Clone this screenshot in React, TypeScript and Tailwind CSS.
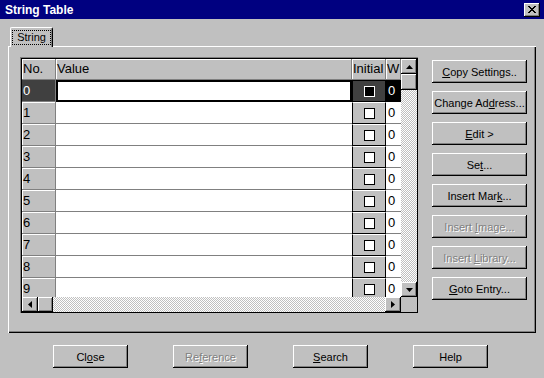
import React from 'react';

const raised = 'shadow-[inset_-1px_-1px_0_#000,inset_1px_1px_0_#fff,inset_-2px_-2px_0_#808080]';
const dither = 'bg-[image:repeating-conic-gradient(#c0c0c0_0_25%,#ffffff_0_50%)] bg-[length:2px_2px]';

// "&" marks the mnemonic letter
const Label: React.FC<{ text: string }> = ({ text }) => {
  const i = text.indexOf('&');
  if (i < 0) return <>{text}</>;
  return (
    <>
      {text.slice(0, i)}
      <u className="underline-offset-[1px]">{text[i + 1]}</u>
      {text.slice(i + 2)}
    </>
  );
};

const Btn: React.FC<{ text: string; disabled?: boolean; className?: string }> = ({ text, disabled, className }) => (
  <div
    className={`h-[23px] flex items-center justify-center bg-[#c0c0c0] text-[11px] ${raised} ${
      disabled ? 'text-[#808080] [text-shadow:1px_1px_0_#fff]' : 'text-black'
    } ${className || ''}`}
  >
    <span className="pt-[1px]">
      <Label text={text} />
    </span>
  </div>
);

const Arrow: React.FC<{ dir: 'up' | 'down' | 'left' | 'right'; className?: string }> = ({ dir, className }) => {
  const pts = {
    up: '3.5,0 7,4 0,4',
    down: '0,0 7,0 3.5,4',
    left: '4,0 4,7 0,3.5',
    right: '0,0 0,7 4,3.5',
  }[dir];
  const vertical = dir === 'up' || dir === 'down';
  return (
    <div className={`shrink-0 flex items-center justify-center bg-[#c0c0c0] ${raised} ${className || ''}`}>
      <svg width={vertical ? 7 : 4} height={vertical ? 4 : 7} viewBox={vertical ? '0 0 7 4' : '0 0 4 7'}>
        <polygon points={pts} fill="#000" />
      </svg>
    </div>
  );
};

const rows = [0, 1, 2, 3, 4, 5, 6, 7, 8, 9];

const sideButtons = [
  { text: '&Copy Settings..' },
  { text: 'Change Ad&dress...' },
  { text: '&Edit >' },
  { text: 'Se&t...' },
  { text: 'Insert Mar&k...' },
  { text: 'Insert &Image...', disabled: true },
  { text: 'Insert &Library...', disabled: true },
  { text: '&Goto Entry...' },
];

const headCell = 'h-full shrink-0 flex items-center pl-[1px] border-r border-b border-[#808080] shadow-[inset_1px_1px_0_#fff]';

const StringGrid: React.FC = () => (
  <div className="w-[398px] h-[256px] pt-[2px] pl-[2px] pr-[1px] pb-[1px] bg-[#c0c0c0] shadow-[inset_1px_1px_0_#808080,inset_2px_2px_0_#000,inset_-1px_-1px_0_#000] flex flex-col text-[13px]">
    <div className="flex h-[238px]">
      <div className="w-[379px] flex flex-col overflow-hidden">
        <div className="h-[21px] flex shrink-0">
          <div className={`${headCell} w-[34px]`}>No.</div>
          <div className={`${headCell} w-[296px]`}>Value</div>
          <div className={`${headCell} w-[34px]`}>Initial</div>
          <div className={`${headCell} w-[15px] overflow-hidden`}>W</div>
        </div>
        <div className="flex-1 overflow-hidden">
          {rows.map((n) => {
            const sel = n === 0;
            return (
              <div key={n} className="h-[22px] flex">
                <div
                  className={`w-[34px] shrink-0 flex items-center pl-[1px] border-r border-b border-[#808080] ${
                    sel ? 'bg-[#404040] text-white' : 'bg-[#c0c0c0] shadow-[inset_1px_1px_0_#fff]'
                  }`}
                >
                  {n}
                </div>
                <div
                  className={`w-[296px] shrink-0 bg-white ${
                    sel ? 'shadow-[inset_0_0_0_2px_#000]' : 'border-b border-[#808080]'
                  }`}
                />
                <div
                  className={`w-[34px] shrink-0 flex items-center justify-center border border-black ${
                    sel ? 'bg-[#404040] border-t-black' : 'bg-[#c0c0c0] border-t-white'
                  }`}
                >
                  <div
                    className={`w-[11px] h-[11px] border ${sel ? 'border-white bg-black' : 'border-black bg-white'}`}
                  />
                </div>
                <div
                  className={`w-[15px] shrink-0 flex items-center pl-[2px] ${
                    sel ? 'bg-black text-white' : 'bg-white border-b border-[#808080]'
                  }`}
                >
                  0
                </div>
              </div>
            );
          })}
        </div>
      </div>
      <div className={`w-[16px] flex flex-col ${dither}`}>
        <Arrow dir="up" className="w-[16px] h-[15px]" />
        <div className={`w-[16px] h-[16px] bg-[#c0c0c0] ${raised}`} />
        <div className="flex-1" />
        <Arrow dir="down" className="w-[16px] h-[15px]" />
      </div>
    </div>
    <div className="flex h-[15px]">
      <div className={`w-[379px] flex ${dither}`}>
        <Arrow dir="left" className="w-[16px] h-[15px]" />
        <div className={`w-[15px] h-[15px] bg-[#c0c0c0] ${raised}`} />
        <div className="flex-1" />
        <Arrow dir="right" className="w-[16px] h-[15px]" />
      </div>
      <div className="w-[16px] bg-[#c0c0c0]" />
    </div>
  </div>
);

const CloseGlyph: React.FC = () => (
  <svg width="8" height="7" viewBox="0 0 8 7" shapeRendering="crispEdges">
    <path
      d="M0 0h2v1H0zM6 0h2v1H6zM1 1h2v1H1zM5 1h2v1H5zM2 2h4v1H2zM3 3h2v1H3zM2 4h4v1H2zM1 5h2v1H1zM5 5h2v1H5zM0 6h2v1H0zM6 6h2v1H6z"
      fill="#000"
    />
  </svg>
);

const App: React.FC = () => {
  return (
    <div className="w-[544px] h-[378px] bg-[#c0c0c0] flex flex-col font-['Liberation_Sans',Arial,sans-serif] text-black overflow-hidden select-none">
      <div className="h-[19px] shrink-0 bg-[#000080] flex items-center justify-between pl-[5px] pr-[4px]">
        <span className="text-white text-[12px] font-bold">String Table</span>
        <div className={`w-[16px] h-[14px] flex items-center justify-center bg-[#c0c0c0] ${raised}`}>
          <CloseGlyph />
        </div>
      </div>

      <div className="px-[8px] pt-[8px]">
        <div className="flex pl-[2px]">
          <div className="relative z-10 -mb-[1px] w-[43px] h-[20px] bg-[#c0c0c0] rounded-t-[2px] border-t border-l border-white shadow-[inset_-1px_0_0_#808080] border-r border-r-black pt-[2px] pl-[1px]">
            <div className="w-[39px] h-[15px] border border-dotted border-black flex items-center justify-center text-[11px]">
              String
            </div>
          </div>
        </div>
        <div className="w-[528px] h-[287px] flex pl-[12px] pt-[11px] shadow-[inset_1px_1px_0_#fff,inset_-1px_-1px_0_#000,inset_-2px_-2px_0_#808080]">
          <StringGrid />
          <div className="ml-[14px] pt-[3px] w-[95px] flex flex-col gap-[8px]">
            {sideButtons.map((b) => (
              <Btn key={b.text} text={b.text} disabled={b.disabled} />
            ))}
          </div>
        </div>
      </div>

      <div className="flex gap-[45px] pl-[53px] mt-[12px]">
        <Btn text="Cl&ose" className="w-[75px]" />
        <Btn text="Re&ference" disabled className="w-[75px]" />
        <Btn text="&Search" className="w-[75px]" />
        <Btn text="Help" className="w-[75px]" />
      </div>
    </div>
  );
};

export default App;
